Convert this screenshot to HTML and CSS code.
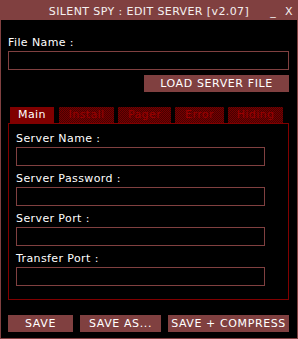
FILE: index.html
```html
<!DOCTYPE html>
<html>
<head>
<meta charset="utf-8">
<link rel="stylesheet" href="styles.css">
</head>
<body>
<div class="window">
  <div class="titlebar">
    <div class="spacer"></div>
    <div class="title">SILENT SPY : EDIT SERVER [v2.07]</div>
    <div class="controls"><span class="ctl">_</span><span class="ctl">X</span></div>
  </div>
  <div class="content">
    <div class="label">File Name :</div>
    <div class="input wide"></div>
    <div class="loadrow"><div class="btn load">LOAD SERVER FILE</div></div>
    <div class="tabs">
      <div class="tab active t-main">Main</div>
      <div class="tab t-install">Install</div>
      <div class="tab t-pager">Pager</div>
      <div class="tab t-error">Error</div>
      <div class="tab t-hiding">Hiding</div>
    </div>
    <div class="panel">
      <div class="group"><div class="label">Server Name :</div><div class="input field"></div></div>
      <div class="group"><div class="label">Server Password :</div><div class="input field"></div></div>
      <div class="group"><div class="label">Server Port :</div><div class="input field"></div></div>
      <div class="group"><div class="label">Transfer Port :</div><div class="input field"></div></div>
    </div>
    <div class="bottom">
      <div class="btn b-save">SAVE</div>
      <div class="btn b-saveas">SAVE AS...</div>
      <div class="btn b-compress">SAVE + COMPRESS</div>
    </div>
  </div>
</div>
</body>
</html>
```
FILE: styles.css
```css
html, body {
  margin: 0;
  padding: 0;
  background: #000;
}
.window {
  width: 298px;
  height: 339px;
  box-sizing: border-box;
  border: 1px solid #804040;
  background: #000;
  font-family: "DejaVu Sans", Verdana, sans-serif;
  font-size: 11px;
  letter-spacing: 0.4px;
  color: #fff;
  overflow: hidden;
}
.titlebar {
  height: 19px;
  background: #804040;
  display: grid;
  grid-template-columns: 1fr auto 1fr;
  align-items: center;
  line-height: 13px;
}
.title {
  padding-top: 1px;
  color: #f4f0f0;
}
.controls {
  display: flex;
  justify-content: flex-end;
  gap: 9px;
  padding-right: 4px;
  padding-top: 1px;
}
.ctl {
  color: #f4f0f0;
}
.content {
  padding: 16px 8px 0 7px;
}
.label {
  height: 13px;
  line-height: 13px;
  white-space: nowrap;
}
.input {
  box-sizing: border-box;
  height: 19px;
  border: 1px solid #804040;
  margin-top: 2px;
  background: #000;
}
.wide {
  width: 281px;
}
.loadrow {
  display: flex;
  justify-content: flex-end;
  margin-top: 5px;
}
.btn {
  height: 17px;
  line-height: 17px;
  background: #804040;
  color: #fff;
  text-align: center;
  white-space: nowrap;
  letter-spacing: 0.6px;
}
.load {
  width: 145px;
}
.tabs {
  display: flex;
  margin-top: 15px;
  padding-left: 2px;
  height: 16px;
}
.tab {
  height: 16px;
  line-height: 15px;
  text-align: center;
  color: #9a0000;
  background-color: #5e0000;
  background-image: repeating-conic-gradient(#760000 0 25%, #480000 0 50%);
  background-size: 2px 2px;
}
.tab.active {
  background: #800000;
  color: #fff;
}
.t-main { width: 44px; }
.t-install { width: 55px; margin-left: 5px; }
.t-pager { width: 53px; margin-left: 4px; }
.t-error { width: 49px; margin-left: 4px; }
.t-hiding { width: 55px; margin-left: 4px; }
.panel {
  box-sizing: border-box;
  width: 281px;
  height: 177px;
  border: 1px solid #800000;
  padding: 8px 0 0 7px;
  display: flex;
  flex-direction: column;
  gap: 6px;
}
.field {
  width: 249px;
}
.bottom {
  display: flex;
  gap: 7px;
  margin-top: 15px;
}
.b-save { width: 65px; }
.b-saveas { width: 81px; }
.b-compress { width: 121px; }
```
